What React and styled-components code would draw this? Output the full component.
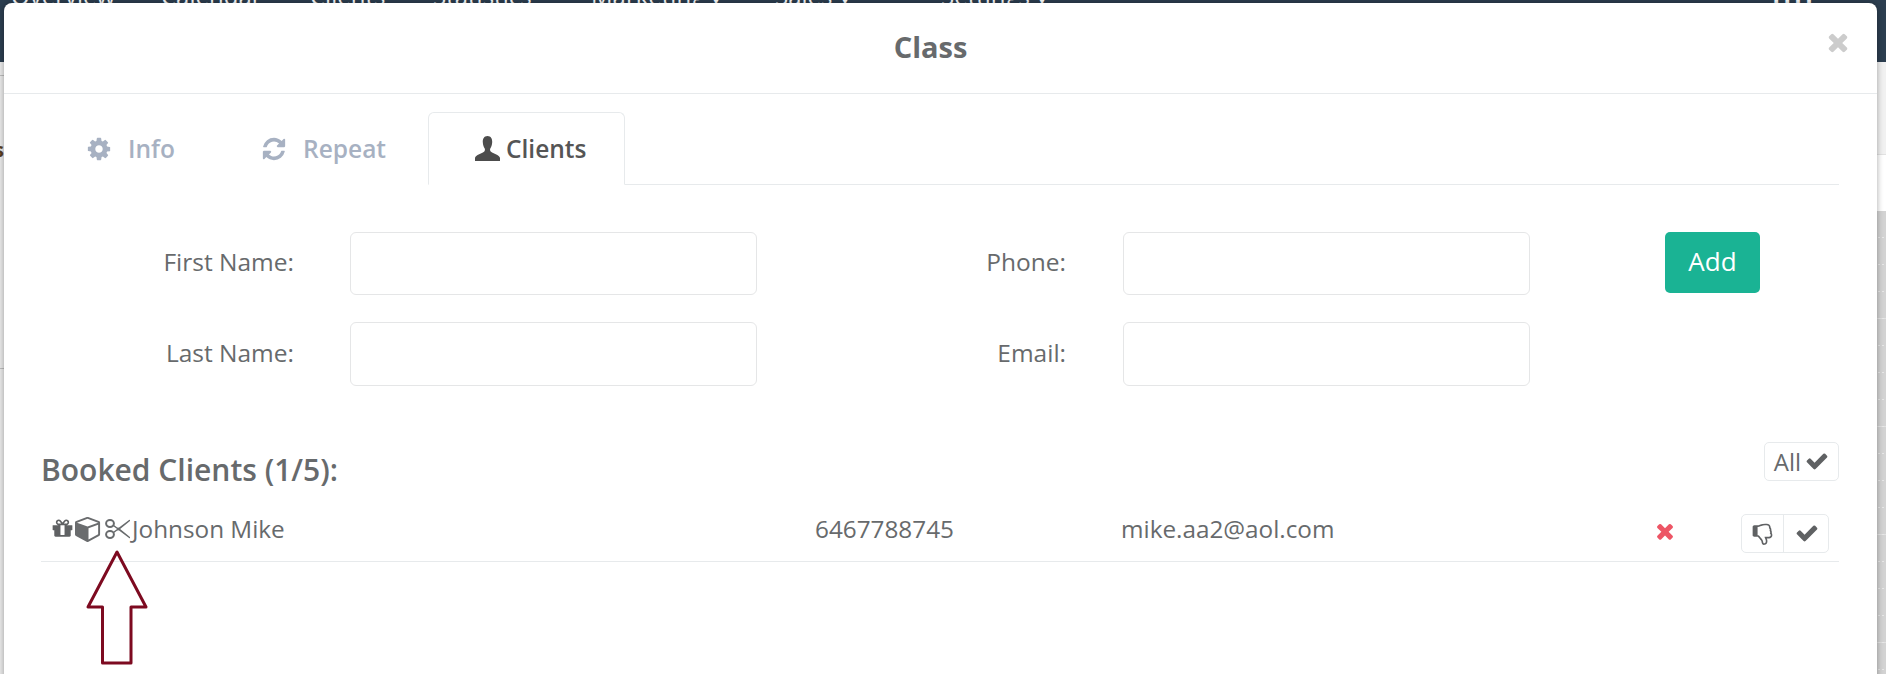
import React from "react";
import styled, { createGlobalStyle } from "styled-components";

const Global = createGlobalStyle`
  html, body { margin: 0; padding: 0; background: #fff; }
  * { box-sizing: border-box; }
  body { font-family: "Open Sans", "Liberation Sans", sans-serif; color: #676a6c; }
`;

const Page = styled.div`
  position: relative;
  width: 1886px;
  height: 674px;
  overflow: hidden;
  display: flex;
  flex-direction: column;
`;
const Nav = styled.nav`
  height: 62px;
  flex: none;
  background: #2c3e50;
  overflow: hidden;
  display: flex;
  padding-left: 11px;
  color: #fff;
  font-size: 24px;
  line-height: 32px;
`;
const NavItem = styled.span`
  margin-top: -20px;
  flex: none;
  width: ${p => p.$w}px;
  white-space: nowrap;
`;
const NavBars = styled.span`
  margin: -20px 70px 0 auto;
  flex: none;
  font-weight: 700;
  letter-spacing: 3px;
`;
const Behind = styled.div`
  flex: 1;
  display: flex;
  justify-content: space-between;
`;
const LeftStrip = styled.div`
  width: 940px;
  background: #ebebeb;
  display: flex;
  flex-direction: column;
  overflow: hidden;
  padding-top: 13px;
`;
const LeftLine = styled.div`
  height: 1px;
  flex: none;
  background: #bdbdbd;
  margin-top: ${p => p.$top}px;
`;
const Fragment = styled.span`
  font-size: 20px;
  line-height: 20px;
  height: 20px;
  flex: none;
  margin: 64px 0 0 -6px;
  color: #5a3d20;
  font-weight: 700;
`;
const RightStrip = styled.div`
  width: 940px;
  display: flex;
  flex-direction: column;
`;
const Light = styled.div`
  height: 93px;
  background: #f1f1f1;
  border-bottom: 1px solid #e2e2e2;
`;
const White = styled.div`
  height: 56px;
  background: #fff;
`;
const Grey = styled.div`
  position: relative;
  flex: 1;
  background-color: #d3d3d3;
  background-image: repeating-linear-gradient(
    to bottom,
    transparent 0 107px,
    #e2e2e2 107px 108px
  );
  &::after {
    content: "";
    position: absolute;
    inset: 0;
    background-image: repeating-linear-gradient(
      to bottom,
      transparent 0 26px,
      #e8e8e8 26px 27px
    );
    mask-image: repeating-linear-gradient(to right, #000 0 2px, transparent 2px 4px);
  }
`;

const Modal = styled.div`
  position: absolute;
  left: 4px;
  top: 3px;
  width: 1873px;
  height: 700px;
  background: #fff;
  border-radius: 8px;
  box-shadow: 0 0 6px rgba(0, 0, 0, 0.35);
`;
const Header = styled.header`
  position: relative;
  height: 91px;
  border-bottom: 1px solid #e7eaec;
  display: flex;
  align-items: center;
  justify-content: center;
`;
const Title = styled.h4`
  margin: 0 20px 3px 0;
  font-size: 29px;
  font-weight: 700;
  color: #676a6c;
`;
const Close = styled.span`
  position: absolute;
  right: 25px;
  top: 25px;
  display: flex;
  color: #cccccc;
`;
const Body = styled.div`
  padding: 18px 38px 0 37px;
`;
const Tabs = styled.div`
  height: 73px;
  display: flex;
  border-bottom: 1px solid #e7eaec;
`;
const Tab = styled.div`
  height: 73px;
  width: ${p => p.$w}px;
  display: flex;
  align-items: center;
  padding-left: ${p => p.$pl}px;
  font-size: 24.5px;
  font-weight: 600;
  color: ${p => (p.$active ? "#555555" : "#a7b1c2")};
  background: #fff;
  ${p => p.$active && `
    border: 1px solid #e7eaec;
    border-bottom-color: #fff;
    border-radius: 6px 6px 0 0;
  `}
`;
const TabIcon = styled.span`
  display: flex;
  width: ${p => p.$w}px;
  flex: none;
`;
const Form = styled.div`
  margin-top: 47px;
  display: flex;
  flex-direction: column;
  gap: 27px;
`;
const FormRow = styled.div`
  display: flex;
  align-items: center;
  height: ${p => p.$h}px;
`;
const Label = styled.label`
  width: ${p => p.$w}px;
  flex: none;
  text-align: right;
  font-size: 24.5px;
  margin-right: ${p => p.$mr}px;
  padding-bottom: 4px;
  color: #676a6c;
`;
const Input = styled.div`
  width: 407px;
  height: 100%;
  flex: none;
  border: 1px solid #e5e6e7;
  border-radius: 6px;
`;
const AddButton = styled.button`
  margin-left: 135px;
  width: 95px;
  height: 61px;
  margin-bottom: 2px;
  padding: 0 0 4px;
  border: 0;
  border-radius: 5px;
  background: #1ab394;
  color: #fff;
  font: 400 26px "Open Sans", sans-serif;
`;
const BookedHead = styled.div`
  margin-top: 56px;
  height: 39px;
  display: flex;
  justify-content: space-between;
  align-items: flex-start;
`;
const Heading = styled.h3`
  margin: 9px 0 0 0;
  font-size: 30px;
  line-height: 38px;
  font-weight: 600;
  color: #676a6c;
`;
const AllButton = styled.div`
  width: 75px;
  height: 39px;
  border: 1px solid #e7eaec;
  border-radius: 5px;
  display: flex;
  align-items: center;
  justify-content: center;
  gap: 4px;
  font-size: 24px;
  padding-bottom: 1px;
`;
const ClientRow = styled.div`
  height: 81px;
  border-bottom: 1px solid #e7eaec;
  display: flex;
  align-items: center;
  font-size: 24.3px;
  padding-top: 15px;
`;
const Name = styled.div`
  width: 774px;
  flex: none;
  display: flex;
  align-items: center;
  padding-left: 10px;
`;
const Glyph = styled.span`
  display: flex;
  flex: none;
  width: ${p => p.$w}px;
`;
const Cell = styled.div`
  width: ${p => p.$w}px;
  flex: none;
`;
const RedX = styled.span`
  width: 88px;
  flex: none;
  display: flex;
  margin-top: 5px;
  color: #ed5565;
`;
const Group = styled.div`
  width: 88px;
  height: 39px;
  flex: none;
  display: flex;
  margin-top: 9px;
  border: 1px solid #e7eaec;
  border-radius: 5px;
`;
const GroupBtn = styled.span`
  flex: ${p => p.$w}px 0 0;
  display: flex;
  align-items: center;
  justify-content: center;
  color: #5f6163;
  & + & { border-left: 1px solid #e7eaec; }
`;
const ArrowMark = styled.svg`
  position: absolute;
  left: 84px;
  top: 548px;
`;

const P = {
  cog: "M1152 896q0-106-75-181t-181-75-181 75-75 181 75 181 181 75 181-75 75-181zm512-109v222q0 12-8 23t-20 13l-185 28q-19 54-39 91 35 50 107 138 10 12 10 25t-9 23q-27 37-99 108t-94 71q-12 0-26-9l-138-108q-44 23-91 38-16 136-29 186-7 28-36 28h-222q-14 0-24.500-8.500t-11.500-21.500l-28-184q-49-16-90-37l-141 107q-10 9-25 9-14 0-25-11-126-114-165-168-7-10-7-23 0-12 8-23 15-21 51-66.500t54-70.500q-27-50-41-99l-183-27q-13-2-21-12.500t-8-23.500v-222q0-12 8-23t19-13l186-28q14-46 39-92-40-57-107-138-10-12-10-24 0-10 9-23 26-36 98.500-107.500t94.500-71.500q13 0 26 10l138 107q44-23 91-38 16-136 29-186 7-28 36-28h222q14 0 24.500 8.500t11.500 21.500l28 184q49 16 90 37l142-107q9-9 24-9 13 0 25 10 129 119 165 170 7 8 7 22 0 12-8 23-15 21-51 66.500t-54 70.500q26 50 41 98l183 28q13 2 21 12.500t8 23.500z",
  refresh: "M1639 1056q0 5-1 7-64 268-268 434.500t-478 166.500q-146 0-282.500-55t-243.500-157l-129 129q-19 19-45 19t-45-19-19-45v-448q0-26 19-45t45-19h448q26 0 45 19t19 45-19 45l-137 137q71 66 161 102t187 36q134 0 250-65t186-179q11-17 53-117 8-23 30-23h192q13 0 22.500 9.500t9.500 22.500zm25-800v448q0 26-19 45t-45 19h-448q-26 0-45-19t-19-45 19-45l138-138q-148-137-349-137-134 0-250 65t-186 179q-11 17-53 117-8 23-30 23h-199q-13 0-22.500-9.500t-9.500-22.500v-7q65-268 270-434.500t480-166.500q146 0 284 55.500t245 156.500l130-129q19-19 45-19t45 19 19 45z",
  check: "M1671 566q0 40-28 68l-724 724-136 136q-28 28-68 28t-68-28l-136-136-362-362q-28-28-28-68t28-68l136-136q28-28 68-28t68 28l294 295 656-657q28-28 68-28t68 28l136 136q28 28 28 68z",
  times: "M1490 1322q0 40-28 68l-136 136q-28 28-68 28t-68-28l-294-294-294 294q-28 28-68 28t-68-28l-136-136q-28-28-28-68t28-68l294-294-294-294q-28-28-28-68t28-68l136-136q28-28 68-28t68 28l294 294 294-294q28-28 68-28t68 28l136 136q28 28 28 68t-28 68l-294 294 294 294q28 28 28 68z",
  cube: "M896 1629l640-349v-636l-640 233v752zm-64-865l698-254-698-254-698 254zm832-252v768q0 35-18 65t-49 47l-704 384q-28 16-61 16t-61-16l-704-384q-31-17-49-47t-18-65v-768q0-40 23-73t61-47l704-256q22-8 44-8t44 8l704 256q38 14 61 47t23 73z",
  gift: "M1056 1356v-716h-320v716q0 25 18 38.500t46 13.500h192q28 0 46-13.500t18-38.500zm-456-844h195l-126-161q-26-31-69-31-40 0-68 28t-28 68 28 68 68 28zm688-96q0-40-28-68t-68-28q-43 0-69 31l-125 161h194q40 0 68-28t28-68zm376 256v320q0 14-9 23t-23 9h-96v416q0 40-28 68t-68 28h-1088q-40 0-68-28t-28-68v-416h-96q-14 0-23-9t-9-23v-320q0-14 9-23t23-9h440q-93 0-158.500-65.500t-65.500-158.500 65.500-158.500 158.500-65.500q107 0 168 77l128 165 128-165q61-77 168-77 93 0 158.500 65.500t65.500 158.500-65.500 158.500-158.500 65.500h440q14 0 23 9t9 23z",
  thumb: "M384 448q0 26-19 45t-45 19-45-19-19-45 19-45 45-19 45 19 19 45zm1152 576q0-35-21.500-81t-53.500-47q15-17 25-47.500t10-55.500q0-69-53-119 18-32 18-69t-17.500-73.500-47.500-52.500q5-30 5-56 0-85-49-126t-136-41h-128q-131 0-342 73-5 2-29 10.500t-35.500 12.500-35 11.500-38 11-32.500 6.500-31 3h-32v640h32q16 0 35.500 9t40 27 38.500 35.500 40 44 34.500 42.500 31.500 41 23 30q55 68 77 91 41 43 59.500 109.500t30.500 125.500 38 85q96 0 128-47t32-145q0-59-48-160.500t-48-159.500h352q50 0 89-38.500t39-89.500zm128 1q0 103-76 179t-180 76h-176q48 99 48 192 0 118-35 186-35 69-102 101.500t-151 32.500q-51 0-90-37-34-33-54-82t-25.500-90.500-17.500-84.500-31-64q-48-50-107-127-101-131-137-155h-274q-53 0-90.500-37.500t-37.500-90.500v-640q0-53 37.500-90.500t90.500-37.500h288q22 0 138-40 128-44 223-66t200-22h112q140 0 226.500 79t85.500 216v5q60 77 60 178 0 22-3 43 38 67 38 144 0 36-9 69 49 73 49 163z",
};
const FaIcon = ({ name, size, color = "currentColor" }) => (
  <svg width={size} height={size} viewBox="0 0 1792 1792" fill={color}>
    <path d={P[name]} />
  </svg>
);
const UserIcon = () => (
  <svg width="25" height="25" viewBox="0 0 25 25" fill="#4c4c4c">
    <path d="M12.500 0C9 0 7.600 3 7.800 6.200c.1 2.400.9 4.600 1.900 6.300.4.700.3 2-.2 2.700C8 17 0 19 0 22v3h25v-3c0-3-8-5-9.500-6.800-.5-.7-.6-2-.2-2.700 1-1.700 1.800-3.900 1.900-6.300C17.400 3 16 0 12.500 0z" />
  </svg>
);
const ScissorsIcon = () => (
  <svg width="25" height="22" viewBox="0 0 25 22" fill="none" stroke="#686b6d" strokeWidth="1.500" strokeLinejoin="round">
    <ellipse cx="5" cy="5.500" rx="3.900" ry="3.400" strokeWidth="2" />
    <ellipse cx="5" cy="16.500" rx="3.900" ry="3.400" strokeWidth="2" />
    <path d="M8.500 7.500L24.500 19.500L12.500 9.800" />
    <path d="M8.500 14.500L24.500 2.500L12.500 12.200" />
  </svg>
);

export default function App() {
  return (
    <Page>
      <Global />
      <Nav>
        <NavItem $w={150}>Overview</NavItem>
        <NavItem $w={149}>Calendar</NavItem>
        <NavItem $w={123}>Clients</NavItem>
        <NavItem $w={158}>Statistics</NavItem>
        <NavItem $w={184}>Marketing ▾</NavItem>
        <NavItem $w={166}>Sales ▾</NavItem>
        <NavItem $w={180}>Settings ▾</NavItem>
        <NavBars>IIII</NavBars>
      </Nav>
      <Behind>
        <LeftStrip>
          <LeftLine $top={0} />
          <Fragment>s</Fragment>
          <LeftLine $top={208} />
        </LeftStrip>
        <RightStrip>
          <Light />
          <White />
          <Grey />
        </RightStrip>
      </Behind>
      <Modal>
        <Header>
          <Title>Class</Title>
          <Close><FaIcon name="times" size={28} /></Close>
        </Header>
        <Body>
          <Tabs>
            <Tab $w={185} $pl={45}>
              <TabIcon $w={42}><FaIcon name="cog" size={26} /></TabIcon>
              Info
            </Tab>
            <Tab $w={202} $pl={35}>
              <TabIcon $w={42}><FaIcon name="refresh" size={26} /></TabIcon>
              Repeat
            </Tab>
            <Tab $w={197} $active $pl={46}>
              <TabIcon $w={31}><UserIcon /></TabIcon>
              Clients
            </Tab>
          </Tabs>
          <Form>
            <FormRow $h={63}>
              <Label $w={253} $mr={56}>First Name:</Label>
              <Input />
              <Label $w={309} $mr={57}>Phone:</Label>
              <Input />
              <AddButton>Add</AddButton>
            </FormRow>
            <FormRow $h={64}>
              <Label $w={253} $mr={56}>Last Name:</Label>
              <Input />
              <Label $w={309} $mr={57}>Email:</Label>
              <Input />
            </FormRow>
          </Form>
          <BookedHead>
            <Heading>Booked Clients (1/5):</Heading>
            <AllButton>All <FaIcon name="check" size={24} color="#5f6163" /></AllButton>
          </BookedHead>
          <ClientRow>
            <Name>
              <Glyph $w={24}><FaIcon name="gift" size={23} color="#5f6163" /></Glyph>
              <Glyph $w={30}><FaIcon name="cube" size={27} color="#6a6c6e" /></Glyph>
              <Glyph $w={27}><ScissorsIcon /></Glyph>
              Johnson Mike
            </Name>
            <Cell $w={306}>6467788745</Cell>
            <Cell $w={532}>mike.aa2@aol.com</Cell>
            <RedX><FaIcon name="times" size={24} /></RedX>
            <Group>
              <GroupBtn $w={41}><FaIcon name="thumb" size={23} /></GroupBtn>
              <GroupBtn $w={47}><FaIcon name="check" size={24} /></GroupBtn>
            </Group>
          </ClientRow>
        </Body>
      </Modal>
      <ArrowMark width="66" height="120" viewBox="0 0 66 120" fill="none">
        <path d="M33 4L4 59H18.500V115H47V59H62Z" stroke="#7d0a20" strokeWidth="3" strokeLinejoin="round" />
      </ArrowMark>
    </Page>
  );
}
